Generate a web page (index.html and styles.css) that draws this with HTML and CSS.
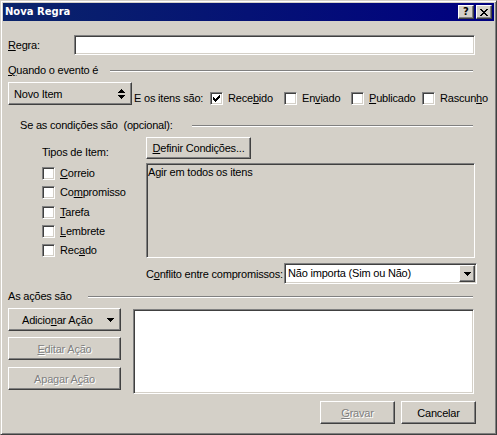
FILE: index.html
```html
<!DOCTYPE html>
<html lang="pt">
<head>
<meta charset="utf-8">
<title>Nova Regra</title>
<link rel="stylesheet" href="styles.css">
</head>
<body>
<div class="window">
  <div class="titlebar">
    <span class="title">Nova Regra</span>
    <div class="tbtn raised"><span class="q">?</span></div>
    <div class="tbtn raised">
      <svg width="8" height="7" viewBox="0 0 8 7" shape-rendering="crispEdges"><g fill="#000">
        <rect x="0" y="0" width="2" height="1"/><rect x="6" y="0" width="2" height="1"/>
        <rect x="1" y="1" width="2" height="1"/><rect x="5" y="1" width="2" height="1"/>
        <rect x="2" y="2" width="4" height="1"/>
        <rect x="3" y="3" width="2" height="1"/>
        <rect x="2" y="4" width="4" height="1"/>
        <rect x="1" y="5" width="2" height="1"/><rect x="5" y="5" width="2" height="1"/>
        <rect x="0" y="6" width="2" height="1"/><rect x="6" y="6" width="2" height="1"/>
      </g></svg>
    </div>
  </div>

  <div class="content">
    <div class="row-regra">
      <span class="regra-label"><u>R</u>egra:</span>
      <div class="field sunken"></div>
    </div>

    <div class="head h1">
      <span class="hl w102"><u>Q</u>uando o evento é</span><i class="etch"></i>
    </div>

    <div class="row-event">
      <div class="spin raised">
        <span>Novo Item</span>
        <svg width="7" height="10" viewBox="0 0 7 10" shape-rendering="crispEdges"><g fill="#000">
          <rect x="3" y="0" width="1" height="1"/><rect x="2" y="1" width="3" height="1"/>
          <rect x="1" y="2" width="5" height="1"/><rect x="0" y="3" width="7" height="1"/>
          <rect x="0" y="6" width="7" height="1"/><rect x="1" y="7" width="5" height="1"/>
          <rect x="2" y="8" width="3" height="1"/><rect x="3" y="9" width="1" height="1"/>
        </g></svg>
      </div>
      <span class="evlabel">E os itens são:</span>
      <div class="cbitem w74">
        <span class="cb sunken">
          <svg class="check" width="7" height="7" viewBox="0 0 7 7" shape-rendering="crispEdges"><g fill="#000">
            <rect x="0" y="2" width="1" height="3"/><rect x="1" y="3" width="1" height="3"/>
            <rect x="2" y="4" width="1" height="3"/><rect x="3" y="3" width="1" height="3"/>
            <rect x="4" y="2" width="1" height="3"/><rect x="5" y="1" width="1" height="3"/>
            <rect x="6" y="0" width="1" height="3"/>
          </g></svg>
        </span>
        <span class="cbtext">Rece<u>b</u>ido</span>
      </div>
      <div class="cbitem w67"><span class="cb sunken"></span><span class="cbtext">En<u>v</u>iado</span></div>
      <div class="cbitem w71"><span class="cb sunken"></span><span class="cbtext"><u>P</u>ublicado</span></div>
      <div class="cbitem"><span class="cb sunken"></span><span class="cbtext">Rascun<u>h</u>o</span></div>
    </div>

    <div class="head h2">
      <span class="hl w172">Se as condições são  (opcional):</span><i class="etch"></i>
    </div>

    <div class="cond">
      <div class="types">
        <div class="types-title">Tipos de Item:</div>
        <div class="cblist">
          <div class="cbrow"><span class="cb sunken"></span><span class="cbtext"><u>C</u>orreio</span></div>
          <div class="cbrow"><span class="cb sunken"></span><span class="cbtext">Co<u>m</u>promisso</span></div>
          <div class="cbrow"><span class="cb sunken"></span><span class="cbtext"><u>T</u>arefa</span></div>
          <div class="cbrow"><span class="cb sunken"></span><span class="cbtext"><u>L</u>embrete</span></div>
          <div class="cbrow"><span class="cb sunken"></span><span class="cbtext">Rec<u>a</u>do</span></div>
        </div>
      </div>
      <div class="cond-right">
        <div class="btn btn-def raised"><span><u>D</u>efinir Condições...</span></div>
        <div class="cond-box sunken">Agir em todos os itens</div>
        <div class="conflict">
          <span class="conflict-label">C<u>o</u>nflito entre compromissos:</span>
          <div class="combo sunken">
            <span class="combo-text">Não importa (Sim ou Não)</span>
            <span class="drop raised">
              <svg width="7" height="4" viewBox="0 0 7 4" shape-rendering="crispEdges"><g fill="#000">
                <rect x="0" y="0" width="7" height="1"/><rect x="1" y="1" width="5" height="1"/>
                <rect x="2" y="2" width="3" height="1"/><rect x="3" y="3" width="1" height="1"/>
              </g></svg>
            </span>
          </div>
        </div>
      </div>
    </div>

    <div class="head h3">
      <span class="hl w80">As ações são</span><i class="etch"></i>
    </div>

    <div class="actions">
      <div class="act-btns">
        <div class="btn add raised">
          <span>Adicio<u>n</u>ar Ação</span>
          <svg width="7" height="4" viewBox="0 0 7 4" shape-rendering="crispEdges"><g fill="#000">
            <rect x="0" y="0" width="7" height="1"/><rect x="1" y="1" width="5" height="1"/>
            <rect x="2" y="2" width="3" height="1"/><rect x="3" y="3" width="1" height="1"/>
          </g></svg>
        </div>
        <div class="btn act raised disabled second"><span><u>E</u>ditar Ação</span></div>
        <div class="btn act raised disabled third"><span>Apagar A<u>ç</u>ão</span></div>
      </div>
      <div class="act-list sunken"></div>
    </div>

    <div class="footer">
      <div class="btn foot raised disabled"><span><u>G</u>ravar</span></div>
      <div class="btn foot raised"><span>Cancelar</span></div>
    </div>
  </div>
</div>
</body>
</html>
```

FILE: styles.css
```css
* { box-sizing: border-box; }

body {
  margin: 0;
  background: #d4d0c8;
  font-family: "Liberation Sans", Arial, sans-serif;
  font-size: 11px;
  letter-spacing: -0.2px;
  color: #000;
}

u { text-decoration: underline; text-underline-offset: 1px; }

.window {
  width: 497px;
  height: 435px;
  background: #d4d0c8;
  border: 1px solid;
  border-color: #d4d0c8 #404040 #404040 #d4d0c8;
  box-shadow: inset 1px 1px #fff, inset -1px -1px #808080;
  padding: 2px;
  overflow: hidden;
}

.raised {
  background: #d4d0c8;
  border: 1px solid;
  border-color: #fff #404040 #404040 #fff;
  box-shadow: inset -1px -1px #808080;
}

.sunken {
  border: 1px solid;
  border-color: #808080 #fff #fff #808080;
  box-shadow: inset 1px 1px #404040, inset -1px -1px #d4d0c8;
  background: #fff;
}

/* title bar */
.titlebar {
  height: 18px;
  display: flex;
  align-items: center;
  padding: 0 2px;
  background: linear-gradient(90deg, #0a246a, #000080);
}
.title {
  flex: 1;
  color: #fff;
  font-family: "DejaVu Sans", sans-serif;
  font-weight: bold;
  font-size: 10px;
  letter-spacing: 0;
  line-height: 14px;
}
.tbtn {
  flex: none;
  width: 16px;
  height: 14px;
  margin-left: 2px;
  display: flex;
  align-items: center;
  justify-content: center;
}
.tbtn .q {
  font-family: "DejaVu Sans", sans-serif;
  font-weight: bold;
  font-size: 10px;
  line-height: 10px;
  letter-spacing: 0;
}

/* content */
.content { padding: 0 19px 0 5px; }

.row-regra {
  margin-top: 14px;
  height: 20px;
  display: flex;
  align-items: center;
}
.regra-label { flex: none; width: 66px; }
.field { flex: 1; height: 20px; }

.head {
  display: flex;
  align-items: center;
  height: 13px;
  line-height: 13px;
}
.hl { flex: none; white-space: pre; }
.w102 { width: 102px; }
.w172 { width: 172px; }
.w80 { width: 80px; }
.etch {
  flex: 1;
  height: 2px;
  margin-right: 2px;
  border-top: 1px solid #808080;
  border-bottom: 1px solid #fff;
}
.h1 { margin-top: 9px; }
.h2 { margin-top: 14px; padding-left: 12px; }
.h3 { margin-top: 6px; }

/* event row */
.row-event {
  margin-top: 5px;
  height: 23px;
  display: flex;
  align-items: flex-end;
  white-space: nowrap;
}
.spin {
  flex: none;
  width: 124px;
  height: 23px;
  display: flex;
  align-items: center;
  justify-content: space-between;
  padding: 0 6px 0 5px;
}
.evlabel { flex: none; width: 76px; margin-left: 2px; line-height: 13px; }
.cbitem {
  flex: none;
  display: flex;
  align-items: flex-end;
}
.w74 { width: 74px; }
.w67 { width: 67px; }
.w71 { width: 71px; }
.cbtext { line-height: 13px; white-space: nowrap; }

.cb {
  flex: none;
  width: 13px;
  height: 13px;
  margin-right: 5px;
  position: relative;
}
.check { position: absolute; left: 2px; top: 2px; }

/* conditions */
.cond { margin-top: 5px; display: flex; }
.types { flex: none; width: 138px; padding-left: 34px; }
.types-title { margin-top: 9px; line-height: 13px; }
.cblist { margin-top: 5px; }
.cbrow {
  height: 19.25px;
  display: flex;
  align-items: center;
  line-height: 13px;
}

.cond-right { flex: 1; }
.btn {
  display: flex;
  align-items: center;
  justify-content: center;
  white-space: nowrap;
}
.btn-def { width: 105px; height: 22px; }
.cond-box {
  margin-top: 4px;
  height: 95px;
  background: #d4d0c8;
  padding: 2px 1px 0 1px;
  line-height: 13px;
}
.conflict {
  margin-top: 5px;
  height: 21px;
  display: flex;
  align-items: center;
  margin-right: -2px;
}
.conflict-label { flex: none; width: 138px; white-space: nowrap; }
.combo {
  flex: 1;
  height: 21px;
  padding: 1px;
  display: flex;
  align-items: center;
}
.combo-text { flex: 1; padding-left: 2px; line-height: 17px; white-space: nowrap; }
.drop {
  flex: none;
  width: 16px;
  height: 17px;
  display: flex;
  align-items: center;
  justify-content: center;
}

/* actions */
.actions { margin-top: 5px; height: 86px; display: flex; }
.act-btns { flex: none; width: 113px; display: flex; flex-direction: column; }
.act-btns .btn { flex: none; height: 23px; }
.add { justify-content: space-between; padding: 0 6px 0 13px; }
.second { margin-top: 6px; }
.third { margin-top: 7px; }
.act-list {
  flex: 1;
  margin-left: 12px;
  margin-right: 1px;
  margin-top: 1px;
  height: 85px;
}

.disabled { color: #808080; text-shadow: 1px 1px 0 #fff; }

.footer {
  margin-top: 7px;
  margin-right: -1px;
  display: flex;
  justify-content: flex-end;
  gap: 6px;
}
.foot { flex: none; width: 75px; height: 23px; }
```
